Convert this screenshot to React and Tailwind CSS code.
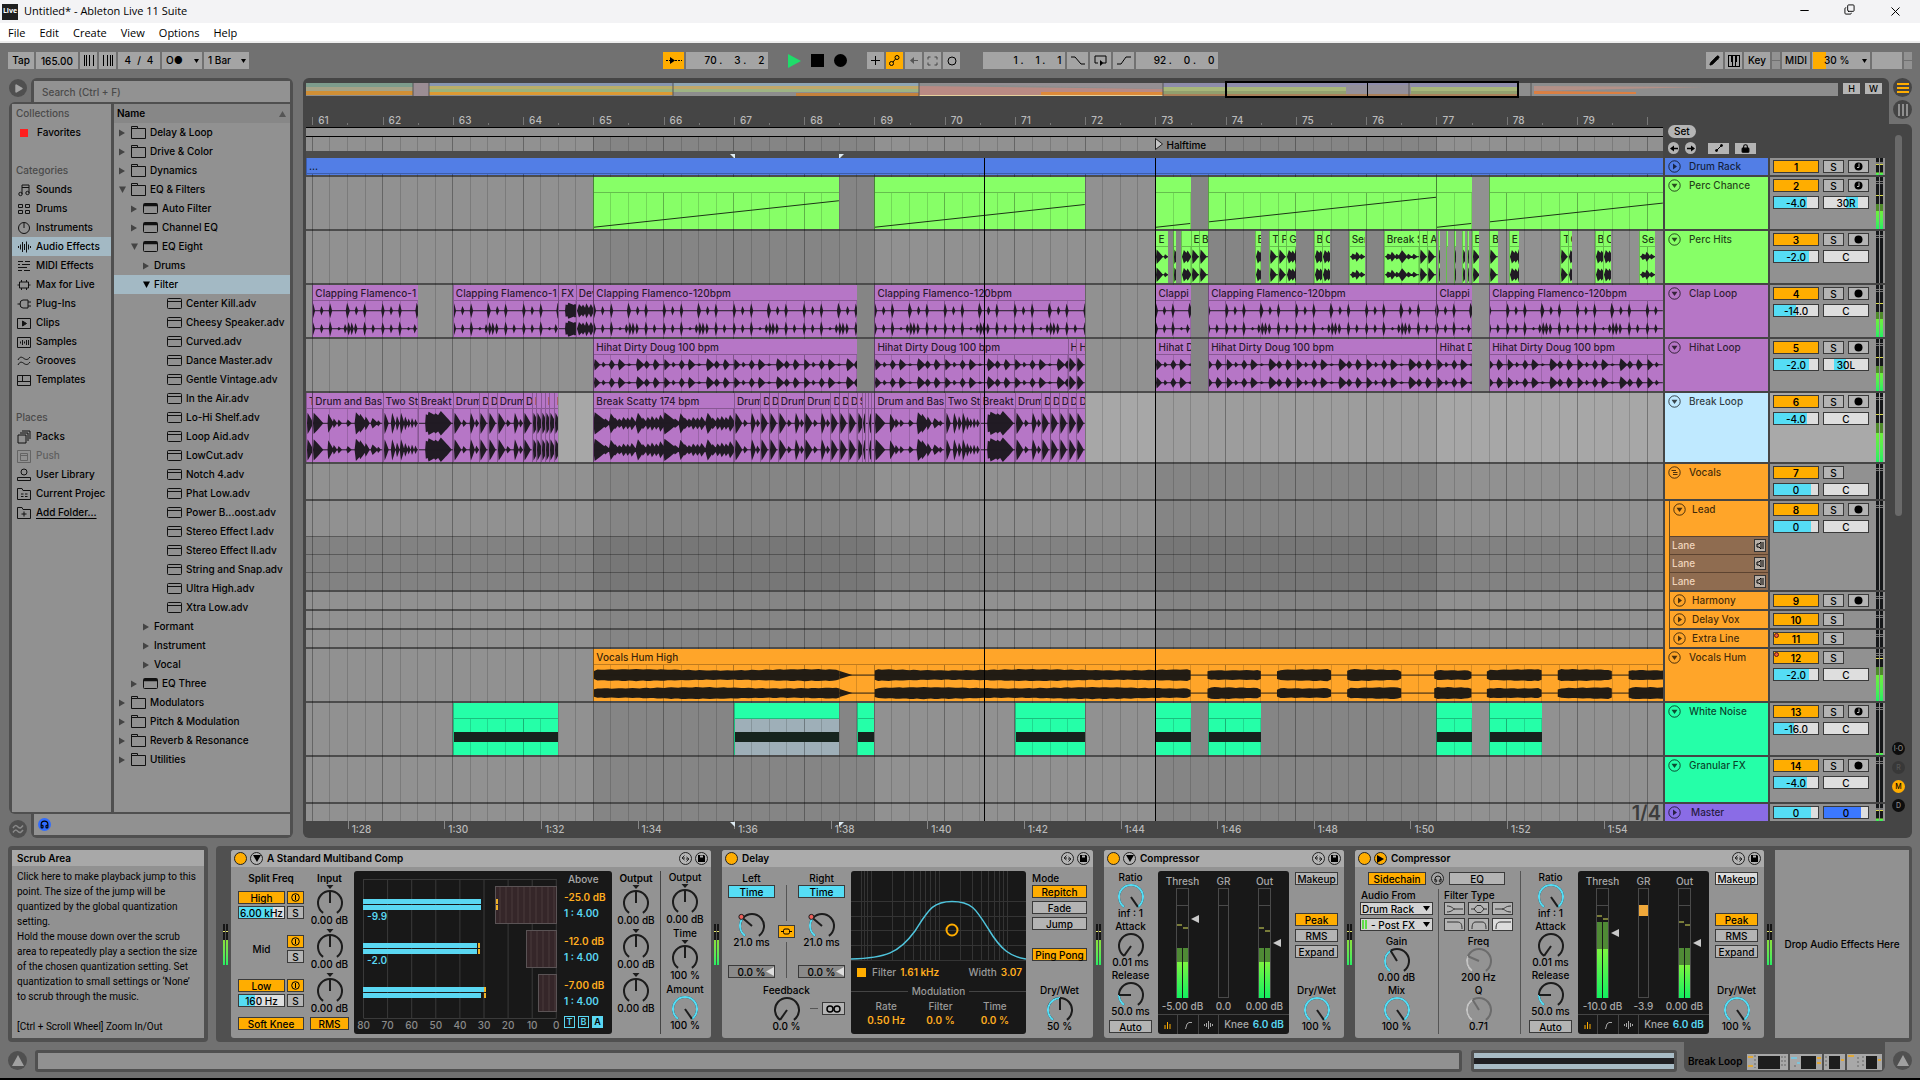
import React from 'react';
import { Minus, Copy, X, Play, Headphones, Lock, Pencil } from 'lucide-react';

// Visible range of the arrangement, in bars
const VIEW_START = 60.91;
const VIEW_SPAN = 19.314;
const VIEW_END = VIEW_START + VIEW_SPAN;
const pct = (bar) => `${((bar - VIEW_START) / VIEW_SPAN) * 100}%`;
const span = (bars) => `${(bars / VIEW_SPAN) * 100}%`;

/* ---------- waveforms ---------- */

// [position, height, attack, decay], repeated every bar
const CLAP_TOP = [[0, 21, 0.02, 0.03], [0.12, 13, 0.02, 0.03], [0.245, 21, 0.02, 0.03], [0.49, 22, 0.02, 0.04], [0.62, 13, 0.02, 0.03], [0.74, 20, 0.02, 0.03]];
const CLAP_BOTTOM = [[0, 18, 0.02, 0.03], [0.12, 13, 0.02, 0.03], [0.245, 21, 0.02, 0.03], [0.37, 5, 0.02, 0.03], [0.46, 13, 0.02, 0.03], [0.51, 19, 0.02, 0.03], [0.555, 18, 0.02, 0.03], [0.61, 16, 0.02, 0.03], [0.74, 20, 0.02, 0.03], [0.86, 13, 0.02, 0.03]];
const HIHAT = [[0.01, 16, 0.01, 0.08], [0.13, 8, 0.02, 0.04], [0.25, 14, 0.04, 0.05], [0.36, 16, 0.02, 0.09], [0.5, 4, 0.03, 0.04], [0.62, 18, 0.02, 0.1], [0.75, 12, 0.04, 0.05], [0.87, 16, 0.03, 0.07]];
const DRUM = [[0.01, 20, 0.01, 0.14], [0.22, 18, 0.01, 0.08], [0.3, 9, 0.02, 0.05], [0.37, 7, 0.02, 0.05], [0.5, 7, 0.02, 0.06], [0.62, 21, 0.02, 0.14], [0.68, 18, 0.03, 0.1], [0.76, 13, 0.02, 0.06], [0.86, 10, 0.03, 0.08], [0.94, 6, 0.02, 0.04]];
const DENSE = [[0.01, 21, 0.02, 0.2], [0.08, 13, 0.05, 0.14], [0.16, 9, 0.04, 0.08], [0.24, 19, 0.03, 0.1], [0.3, 11, 0.04, 0.07], [0.36, 9, 0.04, 0.07], [0.42, 12, 0.04, 0.07], [0.48, 11, 0.04, 0.07], [0.54, 13, 0.04, 0.07], [0.63, 20, 0.04, 0.1], [0.7, 11, 0.04, 0.07], [0.77, 12, 0.04, 0.07], [0.83, 14, 0.04, 0.07], [0.89, 12, 0.04, 0.07], [0.95, 16, 0.04, 0.08]];
const TWO_STEP = [[0.01, 20, 0.01, 0.06], [0.12, 20, 0.02, 0.05], [0.19, 14, 0.02, 0.04], [0.25, 20, 0.02, 0.05], [0.31, 13, 0.02, 0.04], [0.36, 9, 0.02, 0.03], [0.41, 10, 0.02, 0.03], [0.46, 8, 0.02, 0.03]];
const BLOB = [[0.1, 17, 0.01, 0.3], [0.14, 22, 0.04, 0.3], [0.24, 19, 0.12, 0.2], [0.32, 23, 0.12, 0.16], [0.4, 12, 0.1, 0.08]];
const HIT = [[0.01, 20, 0.01, 0.1], [0.14, 7, 0.02, 0.05], [0.25, 20, 0.02, 0.06], [0.33, 8, 0.02, 0.04]];
const BURST = [[0.03, 19, 0.03, 0.09], [0.09, 17, 0.05, 0.06], [0.14, 21, 0.03, 0.06], [0.21, 19, 0.05, 0.05]];
const SHORT = [[0.04, 9, 0.03, 0.09], [0.1, 14, 0.03, 0.06], [0.17, 8, 0.03, 0.06], [0.25, 18, 0.06, 0.08], [0.34, 8, 0.03, 0.06], [0.42, 8, 0.03, 0.06]];

const PATTERNS = {
  clap: { top: CLAP_TOP, bottom: CLAP_BOTTOM },
  hihat: { top: HIHAT, bottom: HIHAT },
  drum: { top: DRUM, bottom: DRUM, local: true },
  dense: { top: DENSE, bottom: DENSE },
  two: { top: TWO_STEP, bottom: TWO_STEP, local: true },
  blob: { top: BLOB, bottom: BLOB, local: true },
  hit: { top: HIT, bottom: HIT, local: true },
  burst: { top: BURST, bottom: BURST, local: true },
  short: { top: SHORT, bottom: SHORT, local: true },
};

const hitPath = (hits, start, end, cy, local) => {
  let d = '';
  const first = local ? 0 : Math.floor(start) - 1;
  const last = local ? end - start : end;
  const origin = local ? 0 : start;
  for (let bar = first; bar <= last; bar++) {
    hits.forEach(([p, h, a, r]) => {
      const x = (bar + p - origin) * 100;
      if (x < -20 || x > (end - start) * 100) return;
      d += `M${(x - a * 100).toFixed(1)} ${cy}L${x.toFixed(1)} ${cy - h}L${(x + r * 40).toFixed(1)} ${cy - h * 0.62}L${(x + r * 100).toFixed(1)} ${cy}L${(x + r * 40).toFixed(1)} ${cy + h * 0.62}L${x.toFixed(1)} ${cy + h}Z`;
    });
  }
  return d;
};

const Waveform = ({ kind, start, end }) => {
  const width = (end - start) * 100;
  const { top, bottom, local } = PATTERNS[kind];
  return (
    <svg className="relative z-20 block w-full h-full" viewBox={`0 0 ${width} 100`} preserveAspectRatio="none" fill="#211b24">
      <path d={hitPath(top, start, end, 27, local)} />
      <path d={hitPath(bottom, start, end, 77, local)} />
      <path d={`M0 27H${width}M0 77H${width}`} stroke="#211b24" strokeWidth="1" vectorEffect="non-scaling-stroke" />
    </svg>
  );
};

const HUM_PARTS = [[65, 68.5], [69, 73.5], [73.74, 74.5], [74.73, 75.5], [75.73, 76.5], [76.97, 77.5], [77.72, 78.5], [78.73, 79.5], [79.74, 80.3]];

const HumWave = ({ start, end }) => {
  const width = (end - start) * 100;
  const block = (a, b, cy, seed) => {
    const up = [];
    const down = [];
    const steps = Math.max(10, Math.round((b - a) * 20));
    for (let i = 0; i <= steps; i++) {
      const x = ((a + ((b - a) * i) / steps - start) * 100).toFixed(1);
      const edge = i === 0 || i === steps ? 11 : 14.5;
      const h = edge + Math.sin(i * 1.7 + seed) * 0.7 + Math.sin(i * 0.13 + seed * 2) * 1.6;
      up.push(`${x} ${(cy - h).toFixed(1)}`);
      down.unshift(`${x} ${(cy + h).toFixed(1)}`);
    }
    return `M${up.join('L')}L${down.join('L')}Z`;
  };
  return (
    <svg className="relative z-20 block w-full h-full" viewBox={`0 0 ${width} 100`} preserveAspectRatio="none" fill="#221c14">
      {HUM_PARTS.map(([a, b], i) => (
        <path key={a} d={block(a, b, 28, i) + block(a, b, 78, i + 2)} />
      ))}
      <path d="M350 17L368 28L350 39ZM350 67L368 78L350 89Z" />
      <path d={`M0 28H${width}M0 78H${width}`} stroke="#221c14" vectorEffect="non-scaling-stroke" />
    </svg>
  );
};

/* ---------- tracks ---------- */

const GREEN = 'bg-[#87ff67]';
const PURPLE = 'bg-[#b676c6]';
const ORANGE = 'bg-[#ffa529]';
const TEAL = 'bg-[#25ffa8]';

const clap = 'Clapping Flamenco-120bpm';
const hihat = 'Hihat Dirty Doug 100 bpm';

// [label, start, end, waveform]
const percHits = [
  ['E', 73, 73.18, 'hit'], ['', 73.25, 73.29, 'hit'], ['', 73.37, 73.5, 'burst'], ['E', 73.5, 73.62, 'hit'], ['B', 73.62, 73.75, 'hit'],
  ['E', 74.41, 74.5, 'burst'], ['T', 74.62, 74.75, 'hit'], ['P', 74.75, 74.86, 'hit'], ['G', 74.86, 75, 'burst'],
  ['B', 75.25, 75.375, 'burst'], ['C', 75.375, 75.48, 'burst'], ['Ser', 75.75, 75.98, 'short'],
  ['Break S', 76.25, 76.75, 'short'], ['B', 76.75, 76.87, 'hit'], ['A', 76.87, 77, 'hit'],
  ['', 77.02, 77.05, 'hit'], ['', 77.13, 77.15, 'hit'], ['', 77.25, 77.27, 'hit'], ['', 77.37, 77.4, 'hit'], ['', 77.43, 77.46, 'hit'],
  ['E', 77.5, 77.6, 'hit'], ['B', 77.75, 77.875, 'hit'], ['E', 78.03, 78.17, 'burst'], ['T', 78.76, 78.865, 'hit'], ['C', 78.865, 78.93, 'burst'],
  ['B', 79.25, 79.375, 'burst'], ['C', 79.375, 79.485, 'burst'], ['Ser', 79.88, 80.11, 'short'],
];

const breakLoop = [
  ['T', 60.91, 61, 'hit'], ['Drum and Bas', 61, 62, 'drum'], ['Two St', 62, 62.5, 'two'], ['Breakt', 62.5, 63, 'blob'],
  ['Drum', 63, 63.375, 'hit'], ['D', 63.375, 63.5, 'hit'], ['D', 63.5, 63.625, 'hit'], ['Drum', 63.625, 64, 'hit'], ['D', 64, 64.125, 'hit'],
  ['I', 64.125, 64.19, 'hit'], ['', 64.19, 64.25, 'hit'], ['', 64.25, 64.31, 'hit'], ['I', 64.31, 64.37, 'hit'], ['', 64.37, 64.44, 'hit'], ['I', 64.44, 64.5, 'hit'],
  ['Break Scatty 174 bpm', 65, 67, 'dense'], ['Drum', 67, 67.375, 'hit'], ['D', 67.375, 67.5, 'hit'], ['D', 67.5, 67.625, 'hit'],
  ['Drum', 67.625, 68, 'hit'], ['Drum', 68, 68.375, 'hit'], ['D', 68.375, 68.5, 'hit'], ['D', 68.5, 68.625, 'hit'], ['D', 68.625, 68.75, 'hit'],
  ['S', 68.75, 68.82, 'hit'], ['', 68.82, 68.87, 'burst'], ['', 68.87, 68.91, 'blob'], ['', 68.91, 68.95, 'burst'], ['', 68.95, 69, 'blob'],
  ['Drum and Bas', 69, 70, 'drum'], ['Two St', 70, 70.5, 'two'], ['Breakt', 70.5, 71, 'blob'], ['Drum', 71, 71.375, 'hit'],
  ['D', 71.375, 71.5, 'hit'], ['D', 71.5, 71.625, 'hit'], ['D', 71.625, 71.75, 'hit'], ['D', 71.75, 71.875, 'hit'], ['D', 71.875, 72, 'hit'],
];

const TRACKS = [
  { n: 1, name: 'Drum Rack', color: 'bg-[#527ee6]', h: 'h-[19px]', folded: true, arm: 'midi', level: 85, clips: [['...', 60.91, VIEW_END, 'flat']] },
  { n: 2, name: 'Perc Chance', color: GREEN, h: 'h-[54px]', arm: 'midi', vol: '-4.0', fill: 75, pan: '30R', panFrom: 50, panTo: 78, level: 34,
    clips: [['', 65, 68.5, 'ramp', 5], ['', 69, 72, 'ramp', 5], ['', 73, 73.5, 'ramp', 5], ['', 73.75, 77, 'ramp', 20], ['', 77, 77.5, 'ramp', 5], ['', 77.75, VIEW_END, 'ramp', 20]] },
  { n: 3, name: 'Perc Hits', color: GREEN, h: 'h-[54px]', arm: 'rec', vol: '-2.0', fill: 79, pan: 'C', level: 0, clips: percHits },
  { n: 4, name: 'Clap Loop', color: PURPLE, h: 'h-[54px]', arm: 'rec', vol: '-14.0', fill: 50, pan: 'C', level: 34,
    clips: [['Clapping Flamenco-1', 61, 62.5, 'clap'], ['Clapping Flamenco-1', 63, 64.5, 'clap'], ['FX', 64.5, 64.75, 'blob'], ['Dev', 64.75, 65, 'burst'], [clap, 65, 68.75, 'clap'], [clap, 69, 72, 'clap'], ['Clappi', 73, 73.5, 'clap'], [clap, 73.75, 77, 'clap'], ['Clappi', 77, 77.5, 'clap'], [clap, 77.75, VIEW_END, 'clap']] },
  { n: 5, name: 'Hihat Loop', color: PURPLE, h: 'h-[54px]', arm: 'rec', vol: '-2.0', fill: 79, pan: '30L', panFrom: 22, panTo: 50, level: 34,
    clips: [[hihat, 65, 68.75, 'hihat'], [hihat, 69, 71.75, 'hihat'], ['H', 71.75, 71.875, 'hit'], ['H', 71.875, 72, 'hit'], ['Hihat D', 73, 73.5, 'hihat'], [hihat, 73.75, 77, 'hihat'], ['Hihat D', 77, 77.5, 'hihat'], [hihat, 77.75, VIEW_END, 'hihat']] },
  { n: 6, name: 'Break Loop', color: 'bg-[#bfe9ff]', clipColor: PURPLE, h: 'h-[71px]', arm: 'rec', vol: '-4.0', fill: 75, pan: 'C', level: 42, selected: true, clips: breakLoop },
  { n: 7, name: 'Vocals', color: ORANGE, h: 'h-[37px]', group: true, vol: '0', fill: 84, pan: 'C', level: 0, clips: [] },
  { n: 8, name: 'Lead', color: ORANGE, h: 'h-[91px]', child: true, arm: 'rec', vol: '0', fill: 84, pan: 'C', level: 0, lanes: 3, clips: [] },
  { n: 9, name: 'Harmony', color: ORANGE, h: 'h-[19px]', child: true, folded: true, arm: 'rec', level: 0, clips: [] },
  { n: 10, name: 'Delay Vox', color: ORANGE, h: 'h-[19px]', child: true, folded: true, level: 0, clips: [] },
  { n: 11, name: 'Extra Line', color: ORANGE, h: 'h-[19px]', child: true, folded: true, dot: true, level: 0, clips: [] },
  { n: 12, name: 'Vocals Hum', color: ORANGE, h: 'h-[54px]', dot: true, vol: '-2.0', fill: 79, pan: 'C', level: 50, clips: [['Vocals Hum High', 65, VIEW_END, 'hum']] },
  { n: 13, name: 'White Noise', color: TEAL, h: 'h-[54px]', arm: 'midi', vol: '-16.0', fill: 45, pan: 'C', level: 3,
    clips: [['', 63, 64.5, 'note'], ['', 67, 68.5, 'noteSelected'], ['', 68.75, 69, 'note'], ['', 71, 72, 'note'], ['', 73, 73.5, 'note'], ['', 73.75, 74.5, 'note'], ['', 77, 77.5, 'note'], ['', 77.75, 78.5, 'note']] },
  { n: 14, name: 'Granular FX', color: TEAL, h: 'h-[47px]', arm: 'rec', vol: '-4.0', fill: 75, pan: 'C', level: 0, clips: [] },
];

const Ramp = ({ start, end, from }) => {
  const width = (end - start) * 70;
  return (
    <svg className="relative z-20 block w-full h-full" viewBox={`0 0 ${width} 100`} preserveAspectRatio="none">
      <path d={`M0 ${100 - from}L${width} ${100 - from - (end - start) * 21}`} stroke="#1d3517" strokeWidth="1" fill="none" vectorEffect="non-scaling-stroke" />
    </svg>
  );
};

const Clip = ({ clip, color }) => {
  const [label, start, end, kind, from] = clip;
  return (
    <div
      className={`absolute inset-y-0 overflow-hidden border-l border-black/25 flex flex-col ${color}`}
      style={{ left: pct(start), width: span(end - start) }}
    >
      <div className={`relative z-20 h-4 shrink-0 border-b border-black/25 pl-0.5 text-[10px] leading-[17px] whitespace-nowrap text-black/80 ${color}`}>{label}</div>
      <div className={`relative flex-1 min-h-0 ${kind === 'noteSelected' ? 'bg-[#9eafb8]' : ''}`}>
        {kind === 'ramp' && <Ramp start={start} end={end} from={from} />}
        {kind === 'hum' && <HumWave start={start} end={end} />}
        {kind.startsWith('note') && <div className="relative z-20 mt-[13px] h-[10px] bg-[#16241e]" />}
        {PATTERNS[kind] && <Waveform kind={kind} start={start} end={end} />}
      </div>
    </div>
  );
};

const Lane = ({ track }) => (
  <div className={`relative border-b-2 border-[#4c4c4c] ${track.h} ${track.selected ? 'bg-white/20' : ''}`}>
    {track.lanes && (
      <div className="absolute inset-x-0 bottom-0 top-[35px] flex flex-col bg-black/10">
        <div className="flex-1 border-t border-black/30" />
        <div className="flex-1 border-t border-black/30" />
        <div className="flex-1 border-t border-black/30" />
      </div>
    )}
    {track.clips.map((clip, i) => (
      <Clip key={i} clip={clip} color={track.clipColor || track.color} />
    ))}
  </div>
);

const GridLines = ({ className }) => {
  const lines = [];
  for (let q = 61; q < VIEW_END; q += 0.25) lines.push(q);
  return (
    <svg className={`absolute inset-0 w-full h-full ${className}`}>
      {lines.map((q) => (
        <line key={q} x1={pct(q)} x2={pct(q)} y1="0" y2="100%" stroke="#000" strokeOpacity={Number.isInteger(q) ? 0.3 : 0.15} shapeRendering="crispEdges" />
      ))}
    </svg>
  );
};

const Bands = () => (
  <div className="absolute inset-0">
    {[65, 73].map((b) => (
      <div key={b} className="absolute inset-y-0 bg-black/8" style={{ left: pct(b), width: span(4) }} />
    ))}
  </div>
);

/* ---------- small shared pieces ---------- */

const Btn = ({ className = '', on, children, ...rest }) => (
  <button className={`flex items-center justify-center border border-[#3a3a3a] h-[13px] text-[10px] leading-none whitespace-nowrap text-black ${on === 'amber' ? 'bg-[#ffad00]' : on === 'cyan' ? 'bg-[#55ddf5]' : on === 'white' ? 'bg-[#dcdcdc]' : 'bg-[#b4b4b4]'} ${className}`} {...rest}>
    {children}
  </button>
);

const Field = ({ label, value, from = 0, to = 0, fill = 'bg-[#55ddf5]', bg = 'bg-[#dedede]', className = '' }) => (
  <div className={`relative h-[13px] border border-[#3a3a3a] ${bg} ${className}`}>
    <div className={`absolute inset-y-0 ${fill}`} style={{ left: `${from}%`, width: `${to - from}%` }} />
    <input aria-label={label} defaultValue={value} className="absolute inset-0 w-full bg-transparent text-center text-[10px] leading-none text-black outline-none" />
  </div>
);

const FoldIcon = ({ folded, group }) => (
  <svg width="13" height="13" viewBox="0 0 13 13" fill="none" stroke="#000" strokeOpacity="0.7">
    <circle cx="6.5" cy="6.5" r="5.7" />
    {group && <path d="M3.5 4.5H8M5 6.5H9.5M5 8.5H9.5" />}
    {!group && folded && <path d="M5 3.5L9 6.5L5 9.5Z" fill="#000" fillOpacity="0.7" stroke="none" />}
    {!group && !folded && <path d="M3.5 4.8H9.5L6.5 9Z" fill="#000" fillOpacity="0.7" stroke="none" />}
  </svg>
);

const Meter = ({ level }) => (
  <div className="flex gap-px w-[7px] self-stretch">
    {[0, 1].map((i) => (
      <div key={i} className="flex flex-1 flex-col justify-end bg-[#151719]">
        <div className="flex flex-col h-[3px] mb-auto mt-1 border-y border-[#777]" />
        {level > 20 && <div className="h-px mb-2 bg-[#d8d84a]" />}
        {level > 5 && <div className="h-[15%] bg-[#4f8a2b]" />}
        <div className="bg-linear-to-t from-[#1fef62] to-[#6fee3c]" style={{ height: `${level}%` }} />
      </div>
    ))}
  </div>
);

const TrackHeader = ({ track }) => (
  <div className={`flex ${track.h}`}>
    {track.child && <div className="w-1 shrink-0 bg-[#ffa529]" />}
    <div className={`flex flex-1 flex-col pb-0.5 ${track.child ? 'border-l border-[#6b4a1c]' : ''}`}>
      <div className={`flex flex-1 items-start px-[3px] pt-[2px] ${track.child ? 'gap-1.5' : 'gap-2'} ${track.color}`}>
        <button aria-label={`Fold ${track.name}`} className="shrink-0"><FoldIcon folded={track.folded} group={track.group} /></button>
        <span className="text-[10px] leading-[13px] text-black/75 whitespace-nowrap">{track.name}</span>
      </div>
      {track.lanes && [1, 2, 3].map((l) => (
        <div key={l} className="flex h-[18px] items-center justify-between border-t border-[#5c4330] bg-[#8f6c50] pl-0.5 pr-0.5">
          <span className="text-[10px] text-[#f0d4bb]">Lane</span>
          <button aria-label={`Play lane ${l}`} className="flex h-[13px] w-3 items-center justify-center border border-[#333] bg-[#b8b0a8]">
            <svg width="8" height="9" viewBox="0 0 8 9" stroke="#000" fill="none"><path d="M1 3H3L5 1V8L3 6H1ZM7 1V8" /></svg>
          </button>
        </div>
      ))}
    </div>
  </div>
);

const ArmIcon = ({ kind }) => (
  <svg width="9" height="9" viewBox="0 0 9 9">
    <circle cx="4.5" cy="4.5" r="4" fill="#000" />
    {kind === 'midi' && <path d="M5 1.5V5.5H3" stroke="#bbb" fill="none" />}
  </svg>
);

const TrackMixer = ({ track }) => (
  <div className={`pb-0.5 ${track.h}`}>
    <div className={`flex h-full pl-[3px] pr-0.5 ${track.selected ? 'bg-[#a9a9a9]' : 'bg-[#919191]'}`}>
      <div className="flex flex-1 flex-col gap-1 pt-[2px]">
        <div className="flex gap-1">
          <div className="relative">
            <Btn on="amber" className="w-[46px] font-semibold" aria-label={`Activate track ${track.n}`}>{track.n}</Btn>
            {track.dot && <span className="absolute left-px top-px h-[5px] w-[5px] rounded-full border border-[#5c1a12] bg-[#f05a3c]" />}
          </div>
          <Btn className="w-[21px]" aria-label={`Solo ${track.name}`}>S</Btn>
          {track.arm && <Btn className="w-[21px]" aria-label={`Arm ${track.name}`}><ArmIcon kind={track.arm} /></Btn>}
        </div>
        {track.vol && (
          <div className="flex gap-1">
            <Field label={`${track.name} volume`} value={track.vol} to={track.fill} className="w-[46px]" />
            <Field label={`${track.name} pan`} value={track.pan} from={track.panFrom || 0} to={track.panTo || 0} className="w-[46px]" />
          </div>
        )}
      </div>
      <Meter level={track.level} />
    </div>
  </div>
);

/* ---------- top bars ---------- */

const ToolBtn = ({ className = '', on, children, ...rest }) => (
  <button className={`flex h-[17px] items-center justify-center text-[10px] whitespace-nowrap text-black ${on ? 'bg-[#ffad00]' : 'bg-[#a4a4a4]'} ${className}`} {...rest}>
    {children}
  </button>
);

const Position = ({ label, parts }) => (
  <div role="group" aria-label={label} className="flex h-[17px] w-[82px] items-center justify-end gap-3 bg-[#a4a4a4] pr-1 text-[10px] text-black">
    {parts.map((p, i) => <span key={i}>{p}</span>)}
  </div>
);

const Caret = ({ className }) => (
  <svg className={`pointer-events-none absolute ${className}`} width="5" height="4" viewBox="0 0 5 4"><path d="M0 0H5L2.5 4Z" /></svg>
);

const ToolSelect = ({ label, options, className }) => (
  <div className={`relative h-[17px] bg-[#a4a4a4] ${className}`}>
    <select aria-label={label} className="block h-[17px] w-full appearance-none bg-transparent pl-1 text-[10px] leading-[17px] text-black">
      {options.map((o) => <option key={o}>{o}</option>)}
    </select>
    <Caret className="right-[3px] top-[7px]" />
  </div>
);

const SplitBox = () => (
  <div className="flex w-2 flex-col gap-px"><div className="flex-1 bg-[#929292]" /><div className="flex-1 bg-[#929292]" /></div>
);

const Toolbar = () => (
  <div className="flex h-[35px] items-center px-2">
    <div className="flex gap-0.5">
      <ToolBtn className="w-[26px]">Tap</ToolBtn>
      <input aria-label="Tempo" defaultValue="165.00" className="h-[17px] w-[42px] bg-[#a4a4a4] text-center text-[10px] text-black" />
      <ToolBtn className="w-[17px]" aria-label="Nudge down"><svg width="12" height="11" viewBox="0 0 12 11" stroke="#000" shapeRendering="crispEdges"><path d="M1.5 0V11M3.5 0V11M6.5 0V11M10.5 0V11" /></svg></ToolBtn>
      <ToolBtn className="w-[17px]" aria-label="Nudge up"><svg width="12" height="11" viewBox="0 0 12 11" stroke="#000" shapeRendering="crispEdges"><path d="M1.5 0V11M5.5 0V11M8.5 0V11M10.5 0V11" /></svg></ToolBtn>
      <ToolBtn className="w-[42px] gap-1.5"><span>4</span><span>/</span><span>4</span></ToolBtn>
      <ToolSelect label="Metronome" options={['O●']} className="w-[40px]" />
      <ToolSelect label="Quantization" options={['1 Bar']} className="w-[45px]" />
    </div>
    <div className="grow-[17]" />
    <div className="flex items-center gap-0.5">
      <ToolBtn on className="w-[21px]" aria-label="Follow"><svg width="16" height="9" viewBox="0 0 16 9"><path d="M0 4.5H5M9 4.5H16" stroke="#000" strokeDasharray="2 1" /><path d="M4 1L9 4.5L4 8Z" /></svg></ToolBtn>
      <Position label="Arrangement position" parts={['70 .', '3 .', '2']} />
      <button aria-label="Play" className="ml-[18px] flex w-[13px] justify-center"><svg width="13" height="14" viewBox="0 0 13 14"><path d="M0 0L13 7L0 14Z" fill="#1fdc6a" /></svg></button>
      <button aria-label="Stop" className="ml-2 h-[13px] w-[13px] bg-black" />
      <button aria-label="Record" className="ml-2 mr-[18px] h-[13px] w-[13px] rounded-full bg-black" />
      <ToolBtn className="w-[17px]" aria-label="Overdub"><svg width="11" height="11" viewBox="0 0 11 11" stroke="#000"><path d="M5.5 1V10M1 5.5H10" /></svg></ToolBtn>
      <ToolBtn on className="w-[17px]" aria-label="Automation arm"><svg width="13" height="13" viewBox="0 0 13 13" stroke="#000" fill="none"><circle cx="3.5" cy="9.5" r="2" /><circle cx="9" cy="3.5" r="2" /><path d="M5 8L7.5 5" /></svg></ToolBtn>
      <ToolBtn className="w-[17px]" aria-label="Re-enable automation"><svg width="10" height="9" viewBox="0 0 10 9" stroke="#555" fill="#555"><path d="M4 4.5H9" /><path d="M5 1L1 4.5L5 8Z" stroke="none" /></svg></ToolBtn>
      <ToolBtn className="w-[17px]" aria-label="Capture"><svg width="11" height="10" viewBox="0 0 11 10" stroke="#444" fill="none"><path d="M1 3.5V1H3.5M7.5 1H10V3.5M10 6.5V9H7.5M3.5 9H1V6.5" /></svg></ToolBtn>
      <ToolBtn className="w-[17px]" aria-label="Session record"><svg width="10" height="10" viewBox="0 0 10 10" stroke="#000" fill="none"><circle cx="5" cy="5" r="4" /></svg></ToolBtn>
      <div className="w-[19px]" />
      <Position label="Loop start" parts={['1 .', '1 .', '1']} />
      <ToolBtn className="w-[21px]" aria-label="Punch in"><svg width="14" height="9" viewBox="0 0 14 9" stroke="#000" fill="none"><path d="M0 1H4L10 8H14" /></svg></ToolBtn>
      <ToolBtn className="w-[21px]" aria-label="Loop"><svg width="13" height="11" viewBox="0 0 13 11" stroke="#000" fill="none"><path d="M4 8H1V1H12V8H9" /><path d="M6 5L9.5 8L6 11Z" fill="#000" stroke="none" /></svg></ToolBtn>
      <ToolBtn className="w-[21px]" aria-label="Punch out"><svg width="14" height="9" viewBox="0 0 14 9" stroke="#000" fill="none"><path d="M0 8H4L9 1H14" /></svg></ToolBtn>
      <Position label="Loop length" parts={['92 .', '0 .', '0']} />
    </div>
    <div className="grow-[20]" />
    <div className="flex gap-0.5">
      <ToolBtn className="w-[17px]" aria-label="Draw mode"><Pencil size={11} fill="#000" /></ToolBtn>
      <ToolBtn className="w-[17px]" aria-label="Computer MIDI keyboard">
        <svg width="12" height="12" viewBox="0 0 12 12" stroke="#000" fill="none" shapeRendering="crispEdges"><path d="M0.5 0.5H11.5V11.5H0.5ZM4.5 6V12M7.5 6V12" /><path d="M4 0V7M8 0V7" strokeWidth="2" /></svg>
      </ToolBtn>
      <ToolBtn className="w-[26px]">Key</ToolBtn>
      <SplitBox />
      <ToolBtn className="w-[28px]">MIDI</ToolBtn>
      <div className="relative h-[17px] w-[58px] bg-[#a4a4a4]">
        <div className="absolute inset-y-0 left-px w-[13px] bg-[#ffad00]" />
        <select aria-label="CPU load" className="relative block h-[17px] w-full appearance-none bg-transparent pl-3 text-[10px] leading-[17px] text-black"><option>30 %</option></select>
        <Caret className="right-[3px] top-[7px]" />
      </div>
      <div className="w-[30px] bg-[#a4a4a4]" />
      <SplitBox />
    </div>
  </div>
);

const WindowBar = () => (
  <header className="font-['Open_Sans',sans-serif] font-normal">
    <div className="flex h-[23px] items-center bg-[#f3f3f5]">
      <div className="ml-0.5 flex h-4 w-4 items-center justify-center bg-[#1f1f1f] text-[7px] font-bold text-white">Live</div>
      <h1 className="ml-1.5 text-[11px] text-black">Untitled* - Ableton Live 11 Suite</h1>
      <div className="ml-auto flex text-black">
        <button aria-label="Minimize" className="flex w-[45px] justify-center"><Minus size={13} strokeWidth={2} /></button>
        <button aria-label="Restore" className="flex w-[45px] justify-center"><Copy size={11} strokeWidth={2} className="-scale-x-100 rotate-180" /></button>
        <button aria-label="Close" className="mr-[2px] flex w-[46px] justify-center"><X size={15} strokeWidth={1.6} /></button>
      </div>
    </div>
    <nav className="flex h-5 items-end gap-[14px] border-b-2 border-[#ededed] bg-white pl-2 text-[11px] leading-[17px] text-black">
      {['File', 'Edit', 'Create', 'View', 'Options', 'Help'].map((m) => <button key={m}>{m}</button>)}
    </nav>
  </header>
);

/* ---------- browser ---------- */

const SideIcon = ({ name }) => {
  const shapes = {
    Sounds: <><path d="M5 11V2H12V10" /><path d="M5 4.5H12" /><circle cx="3.5" cy="11" r="1.7" /><circle cx="10.5" cy="10" r="1.7" /></>,
    Drums: <path d="M1.5 2.5H5.5V5.5H1.5ZM8.5 2.5H12.5V5.5H8.5ZM1.5 8.5H5.5V11.5H1.5ZM8.5 8.5H12.5V11.5H8.5Z" />,
    Instruments: <><circle cx="7" cy="7" r="5.5" /><path d="M7 2V7" /></>,
    'Audio Effects': <path d="M1.5 6V8M3.5 4.5V9.5M5.5 2V12M7.5 4V10M9.5 1.5V12.5M11.5 4.5V9.5M13.5 6V8" />,
    'MIDI Effects': <path d="M1 2.5H6M8 2.5H13M1 5.5H3M5 5.5H13M1 8.5H10M1 11.5H5M7 11.5H13" />,
    'Max for Live': <path d="M2.5 4H11.5V10H2.5ZM4.5 4V2M9.5 4V2M4.5 10V12M9.5 10V12M2.5 7H0.5M11.5 7H13.5" />,
    'Plug-Ins': <path d="M0.5 7H3.5M11 3H6A3 4 0 0 0 6 11H11ZM11 5H14M11 9H14" />,
    Clips: <><path d="M0.5 2.5H13.5V12.5H0.5Z" /><path d="M5.5 5L9.5 7.5L5.5 10Z" fill="#111" /></>,
    Samples: <><path d="M0.5 2.5H13.5V12.5H0.5Z" /><path d="M3.5 6.5V8.5M5.5 5V10M7.5 6.5V8.5M9.5 5V10M11.5 5V10" /></>,
    Grooves: <path d="M1 6C3 2 5 3 7 4.5S11 6 13 3M1 11C3 7 5 8 7 9.5S11 11 13 8" />,
    Templates: <path d="M0.5 2.5H13.5V12.5H0.5ZM5.5 2.5V8.5M0.5 8.5H13.5" />,
    Packs: <path d="M1 5H9V13H1ZM3 3H11V11M5 1H13V9" />,
    Push: <path d="M0.5 1.5H13.5V13.5H0.5ZM3.5 4.5H10.5V11.5H3.5ZM3.5 6.5H10.5" />,
    'User Library': <><circle cx="7" cy="4" r="3" /><path d="M0.5 12.5V9.5H13.5V12.5Z" /></>,
    'Current Projec': <path d="M0.5 12.5V1.5H5L6 3.5H13.5V12.5ZM4 7H6.5M8 7H10.5M4 9.5H6.5M8 9.5H10.5" />,
    'Add Folder...': <path d="M0.5 12.5V1.5H5L6 3.5H13.5V12.5ZM7 5.5V10.5M4.5 8H9.5" />,
  };
  return <svg width="14" height="14" viewBox="0 0 14 14" fill="none" stroke="#111" className="shrink-0">{shapes[name]}</svg>;
};

const CATEGORIES = ['Sounds', 'Drums', 'Instruments', 'Audio Effects', 'MIDI Effects', 'Max for Live', 'Plug-Ins', 'Clips', 'Samples', 'Grooves', 'Templates'];
const PLACES = ['Packs', 'Push', 'User Library', 'Current Projec', 'Add Folder...'];

const SideItem = ({ name }) => (
  <li>
    <button className={`flex h-[19px] w-full items-center gap-[5px] overflow-hidden pl-[5px] whitespace-nowrap ${name === 'Audio Effects' ? 'bg-[#a3b9c4]' : ''} ${name === 'Push' ? 'opacity-35' : ''} ${name === 'Add Folder...' ? 'underline underline-offset-2' : ''}`}>
      <SideIcon name={name} />
      <span>{name}</span>
    </button>
  </li>
);

const PRESETS = ['Center Kill', 'Cheesy Speaker', 'Curved', 'Dance Master', 'Gentle Vintage', 'In the Air', 'Lo-Hi Shelf', 'Loop Aid', 'LowCut', 'Notch 4', 'Phat Low', 'Power B...oost', 'Stereo Effect I', 'Stereo Effect II', 'String and Snap', 'Ultra High', 'Xtra Low'];

// [label, indent class, arrow, icon]
const TREE = [
  ['Delay & Loop', 'pl-[5px]', 'right', 'folder'],
  ['Drive & Color', 'pl-[5px]', 'right', 'folder'],
  ['Dynamics', 'pl-[5px]', 'right', 'folder'],
  ['EQ & Filters', 'pl-[5px]', 'down', 'folder'],
  ['Auto Filter', 'pl-[17px]', 'right', 'device'],
  ['Channel EQ', 'pl-[17px]', 'right', 'device'],
  ['EQ Eight', 'pl-[17px]', 'down', 'device'],
  ['Drums', 'pl-[29px]', 'right', null],
  ['Filter', 'pl-[29px]', 'down', null],
  ...PRESETS.map((n) => [`${n}.adv`, 'pl-[53px]', null, 'preset']),
  ['Formant', 'pl-[29px]', 'right', null],
  ['Instrument', 'pl-[29px]', 'right', null],
  ['Vocal', 'pl-[29px]', 'right', null],
  ['EQ Three', 'pl-[17px]', 'right', 'device'],
  ['Modulators', 'pl-[5px]', 'right', 'folder'],
  ['Pitch & Modulation', 'pl-[5px]', 'right', 'folder'],
  ['Reverb & Resonance', 'pl-[5px]', 'right', 'folder'],
  ['Utilities', 'pl-[5px]', 'right', 'folder'],
];

const TreeIcon = ({ kind }) => (
  <svg width="15" height="13" viewBox="0 0 15 13" fill="none" stroke="#111" className="mr-1 shrink-0">
    {kind === 'folder' && <path d="M0.5 12.5V0.5H6.5V2.5H14.5V12.5ZM0.5 2.5H6.5" />}
    {kind === 'device' && <><rect x="0.5" y="1.5" width="14" height="10" rx="1" /><path d="M1 3H14" strokeWidth="2.5" /></>}
    {kind === 'preset' && <><rect x="0.5" y="1.5" width="14" height="10" rx="1" /><path d="M1 4.5H14" /></>}
  </svg>
);

const Browser = () => (
  <aside className="flex w-[284px] shrink-0 flex-col text-[10px] text-black">
    <div className="flex">
      <div className="flex w-[22px] pt-px">
        <button aria-label="Hide browser" className="flex h-[18px] w-[18px] items-center justify-center rounded-full bg-[#4f4f4f]"><Play size={11} fill="#a4a4a4" stroke="none" /></button>
      </div>
      <div className="flex-1 rounded-t-md bg-[#4f4f4f] px-[3px] pt-[3px]">
        <input aria-label="Search" placeholder="Search (Ctrl + F)" className="block h-[21px] w-full bg-[#929292] pl-2 text-[10px] text-black placeholder:text-[#4a4a4a]" />
      </div>
    </div>
    <div className="flex flex-1 gap-[3px] rounded-tl-md rounded-bl-md bg-[#4f4f4f] px-[3px] py-[2px]">
      <div className="w-[99px] shrink-0 bg-[#919191]">
        <h2 className="h-[19px] pl-1 leading-[19px] text-[#4a4a4a]">Collections</h2>
        <button className="flex h-[19px] w-full items-center gap-[9px] pl-2"><span className="h-2 w-2 bg-[#ff1f1f]" /><span>Favorites</span></button>
        <h2 className="mt-[19px] h-[19px] pl-1 leading-[19px] text-[#4a4a4a]">Categories</h2>
        <ul>{CATEGORIES.map((c) => <SideItem key={c} name={c} />)}</ul>
        <h2 className="mt-[19px] h-[19px] pl-1 leading-[19px] text-[#4a4a4a]">Places</h2>
        <ul>{PLACES.map((c) => <SideItem key={c} name={c} />)}</ul>
      </div>
      <div className="min-w-0 flex-1 bg-[#919191]">
        <div className="flex h-[19px] items-center justify-between bg-[#878787] pl-[3px] pr-1 font-semibold">
          <span>Name</span>
          <svg width="7" height="6" viewBox="0 0 7 6"><path d="M3.5 0L7 6H0Z" fill="#555" /></svg>
        </div>
        <ul>
          {TREE.map(([label, indent, arrow, icon]) => (
            <li key={label}>
              <button className={`flex h-[19px] w-full items-center whitespace-nowrap ${indent} ${label === 'Filter' ? 'bg-[#a3b9c4]' : ''}`}>
                <span className={icon === null ? 'w-[11px]' : arrow ? 'w-3' : 'w-0'}>
                  {arrow === 'right' && <svg width="6" height="8" viewBox="0 0 6 8"><path d="M0 0.5L6 4L0 7.5Z" fill="#444" /></svg>}
                  {arrow === 'down' && <svg width="7" height="7" viewBox="0 0 7 7"><path d="M0 0.5H7L3.5 7Z" fill={label === 'Filter' ? '#000' : '#444'} /></svg>}
                </span>
                {icon && <TreeIcon kind={icon} />}
                <span>{label}</span>
              </button>
            </li>
          ))}
        </ul>
      </div>
    </div>
    <div className="flex">
      <div className="flex w-[22px] items-end">
        <button aria-label="Groove pool" className="flex h-[18px] w-[18px] items-center justify-center rounded-full bg-[#4f4f4f]">
          <svg width="12" height="10" viewBox="0 0 12 10" fill="none" stroke="#8a8a8a" strokeWidth="1.5"><path d="M1 4C3 1 4 1 6 3S9 4 11 1.5M1 8.5C3 5.5 4 5.5 6 7.5S9 8.5 11 6" /></svg>
        </button>
      </div>
      <div className="flex-1 rounded-b-md bg-[#4f4f4f] px-[3px] pb-[3px]">
        <div className="flex h-[21px] items-center bg-[#919191] pl-1">
          <button aria-label="Preview" className="flex h-[13px] w-[13px] items-center justify-center rounded-full bg-[#2f6bff]"><Headphones size={9} strokeWidth={3} /></button>
        </div>
      </div>
    </div>
  </aside>
);

/* ---------- arrangement ---------- */

const Overview = () => (
  <div className="flex gap-[5px] pr-[3px]">
    <div className="relative h-[13px] flex-1">
      <svg className="block h-full w-full" viewBox="0 0 1532 13" preserveAspectRatio="none">
        <rect width="1532" height="13" fill="#8d8d8d" />
        <rect width="107" height="4" fill="#7d9c8c" /><rect y="4" width="107" height="4" fill="#a5a287" /><rect y="8" width="107" height="4" fill="#d08f35" />
        <rect x="107" width="16" height="13" fill="#9b8d94" />
        <rect x="123" width="244" height="3" fill="#8796b0" /><rect x="123" y="3" width="244" height="3" fill="#b9ae68" /><rect x="123" y="6" width="244" height="3" fill="#9bb27c" /><rect x="123" y="9" width="244" height="3" fill="#dc9a34" />
        <rect x="367" width="246" height="3" fill="#8fa6b4" /><rect x="367" y="3" width="246" height="3" fill="#c0a869" /><rect x="367" y="6" width="246" height="3" fill="#9eb383" /><rect x="490" y="10" width="123" height="3" fill="#c4813c" />
        <path d="M613 3L857 6V13H613Z" fill="#b98a83" /><path d="M613 0H857V6Z" fill="#948f93" /><rect x="735" y="9" width="122" height="3" fill="#dd8a3a" /><path d="M613 12.5H857" stroke="#e5cf9b" />
        <rect x="857" width="356" height="4" fill="#8e8cab" /><rect x="857" y="4" width="356" height="4" fill="#a7b67a" /><rect x="857" y="8" width="356" height="3" fill="#92a06e" /><rect x="857" y="11" width="356" height="2" fill="#a97f59" />
        <rect x="1040" y="2" width="65" height="9" fill="#94909a" />
        <path d="M1228 3L1400 4L1228 8Z" fill="#b39087" /><path d="M1228 8L1330 9V11H1228Z" fill="#dc7f42" />
        <path d="M107 0V13M123 0V13M367 0V13M613 0V13M857 0V13M1103 0V13M1225 0V13" stroke="#555" />
      </svg>
      <div className="absolute -inset-y-0.5 left-[60%] w-[19.2%] border-2 border-black"><div className="h-full w-[48.5%] border-r border-black" /></div>
    </div>
    <div className="flex gap-[5px]">
      <button className="h-[11px] w-[17px] bg-[#b4b4b4] text-[9px] leading-[11px] text-black">H</button>
      <button className="h-[11px] w-[17px] bg-[#b4b4b4] text-[9px] leading-[11px] text-black">W</button>
    </div>
  </div>
);

const BARS = Array.from({ length: 20 }, (_, i) => 61 + i);
const TIMES = Array.from({ length: 14 }, (_, i) => i);

const LoopMarks = ({ className }) => (
  <>
    <svg className={`absolute -ml-[4px] ${className}`} style={{ left: pct(67) }} width="5" height="5" viewBox="0 0 5 5"><path d="M0 0H5V5Z" fill="#ddeaf2" /></svg>
    <svg className={`absolute ${className}`} style={{ left: pct(68.5) }} width="5" height="5" viewBox="0 0 5 5"><path d="M0 0H5L0 5Z" fill="#ddeaf2" /></svg>
  </>
);

const Timeline = () => (
  <div className="min-w-0 flex-1">
    <div className="relative h-[31px] overflow-hidden text-[#bababa]">
      {BARS.map((b) => (
        <div key={b} className="absolute bottom-0.5 h-2 w-px bg-[#777]" style={{ left: pct(b) }} />
      ))}
      {BARS.slice(0, 19).map((b) => (
        <div key={b} className="absolute bottom-0 pl-1.5 text-[10px] leading-[13px]" style={{ left: pct(b) }}>{b}</div>
      ))}
      {BARS.map((b) => <div key={b} className="absolute bottom-0.5 h-0.5 w-px bg-[#777]" style={{ left: pct(b + 0.5) }} />)}
    </div>
    <div className="h-[10px] border-y border-black bg-[#919191]" />
    <div className="relative h-[14px] bg-[#919191]">
      <Bands />
      <GridLines className="" />
      <div className="absolute inset-y-0 flex items-center gap-[3px] bg-[#868686] pr-1 text-[10px] text-black" style={{ left: pct(73) }}>
        <svg width="8" height="12" viewBox="0 0 8 12"><path d="M0.5 0.5L7.5 6L0.5 11.5Z" fill="#c4c4c4" stroke="#222" /></svg>
        <span className="pt-0.5 leading-3">Halftime</span>
      </div>
    </div>
    <div className="relative h-[7px] bg-[#4c4c4c]"><LoopMarks className="top-[3px]" /></div>
    <div className="relative isolate overflow-hidden bg-[#919191]">
      <Bands />
      {TRACKS.map((t) => <Lane key={t.n} track={t} />)}
      <div className="relative h-[17px]"><span className="absolute bottom-[-2px] right-0.5 z-20 text-[20px] leading-[20px] font-semibold text-[#3c3c3c]">1/4</span></div>
      <GridLines className="z-10" />
      <div className="absolute inset-y-0 z-30 w-px bg-black" style={{ left: pct(70.56) }} />
      <div className="absolute inset-y-0 z-30 w-px bg-black" style={{ left: pct(73) }} />
    </div>
    <div className="relative h-[17px] overflow-hidden text-[#bababa]">
      {TIMES.map((i) => (
        <div key={i} className="absolute top-0 h-2 border-l border-[#888] pl-[3px] text-[10px] leading-[16px]" style={{ left: `${3.07 + i * 7.12}%` }}>1:{28 + i * 2}</div>
      ))}
      <LoopMarks className="top-px" />
    </div>
  </div>
);

const TrackPanel = () => (
  <div className="flex w-[220px] shrink-0 flex-col">
    <div className="flex h-[62px] flex-col items-start gap-1 pl-[3px] pt-[29px]">
      <button className="h-[13px] rounded-full bg-[#b4b4b4] px-1.5 text-[10px] leading-[13px] text-black">Set</button>
      <div className="flex items-center gap-1.5">
        <button aria-label="Previous locator" className="flex h-[12px] w-[11px] items-center justify-center rounded-full bg-[#b4b4b4]"><svg width="8" height="7" viewBox="0 0 8 7"><path d="M0 3.5L4 0.5V6.5ZM3 2.8H8V4.2H3Z" /></svg></button>
        <button aria-label="Next locator" className="flex h-[12px] w-[11px] items-center justify-center rounded-full bg-[#b4b4b4]"><svg width="8" height="7" viewBox="0 0 8 7"><path d="M8 3.5L4 0.5V6.5ZM5 2.8H0V4.2H5Z" /></svg></button>
        <button aria-label="Automation mode" className="ml-1.5 flex h-[11px] w-[21px] items-center justify-center bg-[#b4b4b4]"><svg width="8" height="8" viewBox="0 0 8 8" stroke="#000"><path d="M1.5 6.5L6.5 1.5" /><circle cx="1.5" cy="6.5" r="1" /><circle cx="6.5" cy="1.5" r="1" /></svg></button>
        <button aria-label="Lock envelopes" className="flex h-[11px] w-[21px] items-center justify-center bg-[#b4b4b4]"><Lock size={9} strokeWidth={3} className="[&>rect]:fill-black" /></button>
      </div>
    </div>
    <div className="flex gap-0.5">
      <div className="w-[103px]">
        {TRACKS.map((t) => <TrackHeader key={t.n} track={t} />)}
        <div className="flex h-[17px] items-center gap-[10px] bg-[#8a6ce6] pl-[3px]">
          <button aria-label="Fold Master"><FoldIcon folded /></button>
          <span className="text-[10px] text-black/75">Master</span>
        </div>
      </div>
      <div className="flex-1">
        {TRACKS.map((t) => <TrackMixer key={t.n} track={t} />)}
        <div className="flex h-[17px] items-center bg-[#919191] pl-[3px] pr-0.5">
          <div className="flex flex-1 gap-1">
            <Field label="Master volume" value="0" to={84} className="w-[46px]" />
            <Field label="Cue volume" value="0" to={84} fill="bg-[#3b78ff]" className="w-[46px]" />
          </div>
          <Meter level={70} />
        </div>
      </div>
    </div>
  </div>
);

const RoundLabel = ({ children, on, dim }) => (
  <button className={`flex h-[13px] w-[13px] items-center justify-center rounded-full text-[7px] leading-none ${on ? 'bg-[#ffad00] text-black' : dim ? 'bg-[#383838] text-[#555]' : 'bg-[#0d0d0d] text-[#888]'}`}>{children}</button>
);

const Arrangement = () => (
  <main className="ml-[10px] flex min-w-0 flex-1">
    <div className="flex min-w-0 flex-1 flex-col rounded-l-md rounded-tr-md bg-[#454545] pl-[3px] pr-[4px] pt-[5px]">
      <Overview />
      <div className="flex gap-0.5">
        <Timeline />
        <TrackPanel />
      </div>
    </div>
    <div className="flex w-[23px] shrink-0 flex-col">
      <div className="flex h-[46px] flex-col items-end gap-[3px] pl-1">
        <button aria-label="Arrangement view" className="flex h-[19px] w-[19px] shrink-0 items-center justify-center rounded-full bg-[#454545]"><svg width="12" height="12" viewBox="0 0 12 12" stroke="#ffad00" strokeWidth="2"><path d="M0 2H12M0 6H12M0 10H12" /></svg></button>
        <button aria-label="Session view" className="flex h-[19px] w-[19px] shrink-0 items-center justify-center rounded-full bg-[#454545]"><svg width="12" height="12" viewBox="0 0 12 12" stroke="#8f8f8f" strokeWidth="2"><path d="M2 0V12M6 0V12M10 0V12" /></svg></button>
      </div>
      <div className="flex flex-1 flex-col items-center justify-between rounded-tr-md rounded-br-md bg-[#454545] pb-[26px] pt-[11px] pr-1">
        <div className="h-[381px] w-[7px] rounded-full bg-[#6a6a6a]" />
        <div className="flex flex-col gap-1.5">
          <RoundLabel>I·O</RoundLabel>
          <RoundLabel dim>R</RoundLabel>
          <RoundLabel on>M</RoundLabel>
          <RoundLabel>D</RoundLabel>
        </div>
      </div>
    </div>
  </main>
);

/* ---------- devices ---------- */

const SWEEP = 145;
const polar = (deg, r, cx, cy) => {
  const a = (deg * Math.PI) / 180;
  return `${(cx + r * Math.sin(a)).toFixed(2)} ${(cy - r * Math.cos(a)).toFixed(2)}`;
};
const arc = (from, to, r, cx, cy) => `M${polar(from, r, cx, cy)}A${r} ${r} 0 ${to - from > 180 ? 1 : 0} 1 ${polar(to, r, cx, cy)}`;

// pos runs from 0 to 1; a marked knob rests in the middle and shows no filled arc
const Knob = ({ pos = 0.5, marker, dot, dim }) => {
  const cy = marker ? 18 : 13;
  const height = marker ? 29 : 23;
  const angle = -SWEEP + pos * SWEEP * 2;
  const ink = dim ? '#6c6c6c' : '#1c1c1c';
  const tip = polar(angle, 14, 15, cy).split(' ');
  return (
    <svg className="shrink-0 overflow-visible" width="30" height={height} viewBox={`0 0 30 ${height}`} fill="none" strokeWidth="2">
      {marker && <path d="M11.5 0H18.5L15 4Z" fill="#1c1c1c" />}
      <path d={arc(-SWEEP, SWEEP, 12, 15, cy)} stroke={ink} />
      {!marker && pos > 0 && <path d={arc(-SWEEP, angle, 12, 15, cy)} stroke={dim ? '#c4c4c4' : '#55ddf5'} />}
      <path d={`M15 ${cy}L${polar(angle, 12, 15, cy)}`} stroke={ink} />
      {dot && <circle cx={tip[0]} cy={tip[1]} r="2.5" fill="#f0605a" stroke="#1c1c1c" strokeWidth="1" />}
    </svg>
  );
};

const KnobGroup = ({ label, value, ...knob }) => (
  <div className="flex flex-col items-center whitespace-nowrap">
    {label && <span className="leading-[13px]">{label}</span>}
    <Knob {...knob} />
    <span className="leading-[13px]">{value}</span>
  </div>
);

const RoundBtn = ({ children, className = 'bg-[#b4b4b4]', ...rest }) => (
  <button className={`flex h-[13px] w-[13px] items-center justify-center rounded-full border border-[#222] ${className}`} {...rest}>{children}</button>
);

const Device = ({ title, fold, className, children }) => (
  <section className={`flex shrink-0 flex-col overflow-hidden rounded-[3px] bg-[#939393] ${className}`}>
    <header className="flex h-[17px] shrink-0 items-center gap-[3px] bg-[#ababab] px-[3px]">
      <RoundBtn className="bg-[#ffad00]" aria-label="Device on" />
      {fold === 'down' && <RoundBtn aria-label="Unfold"><svg width="8" height="7" viewBox="0 0 8 7"><path d="M0 0H8L4 7Z" /></svg></RoundBtn>}
      {fold === 'right' && <RoundBtn aria-label="Sidechain toggle" className="bg-[#ffad00]"><svg width="7" height="8" viewBox="0 0 7 8"><path d="M0 0L7 4L0 8Z" /></svg></RoundBtn>}
      <h3 className="ml-px flex-1 font-semibold">{title}</h3>
      <RoundBtn aria-label="Hot-swap"><svg width="9" height="7" viewBox="0 0 9 7" fill="none" stroke="#222"><path d="M3.5 0.5L1 3L3.5 5M1 3H4M5.5 6.5L8 4L5.5 2M8 4H5" /></svg></RoundBtn>
      <RoundBtn aria-label="Save preset"><svg width="7" height="7" viewBox="0 0 7 7"><path d="M0 0H6L7 1V7H0Z" /><rect x="2" y="0.5" width="3" height="2" fill="#b4b4b4" /></svg></RoundBtn>
    </header>
    <div className="flex flex-1 py-1">{children}</div>
  </section>
);

const RackMeter = () => (
  <div className="flex w-[11px] shrink-0 justify-center pt-[74px]">
    <div className="flex h-[41px] gap-px">
      {[0, 1].map((i) => (
        <div key={i} className="flex w-0.5 flex-col justify-end bg-[#161616]">
          <div className="mb-2 h-px bg-[#e4e46c]" />
          <div className="h-[62%] bg-linear-to-t from-[#1fef62] to-[#86e03c]" />
        </div>
      ))}
    </div>
  </div>
);

const Power = () => (
  <Btn on="amber" className="w-[17px]" aria-label="Band on"><svg width="9" height="9" viewBox="0 0 9 9" fill="none" stroke="#000"><circle cx="4.5" cy="4.5" r="3.8" /><path d="M4.5 2V7" /></svg></Btn>
);

const BANDS = [
  { y: 28, end: 118, end2: 118, mark: 134, red: [133, 61], out: '-9.9' },
  { y: 72, end: 114, end2: 114, mark: 116, red: [164, 30], out: '-2.0' },
  { y: 116, end: 121, end2: 118, mark: 122, red: [176, 18], out: '' },
];

const MultibandDisplay = () => (
  <div className="flex h-[163px] w-[258px] shrink-0 rounded-[3px] bg-[#181818]">
    <svg width="210" height="163" viewBox="0 0 210 163" className="shrink-0">
      {Array.from({ length: 9 }, (_, i) => (
        <g key={i}>
          <path d={`M${9.5 + i * 24.1} 8V147`} stroke="#3a3a3a" />
          <text x={9.5 + i * 24.1} y="158" textAnchor="middle" fontSize="10" fill="#8a8a8a">{80 - i * 10}</text>
        </g>
      ))}
      <path d="M9.5 8.5H202.5M9.5 147.5H202.5" stroke="#3a3a3a" />
      {BANDS.map((b) => (
        <g key={b.y}>
          <rect x={b.red[0] + 8.5} y={b.y - 12.5} width={b.red[1]} height="37" fill="#352629" stroke="#5a5355" />
          {Array.from({ length: Math.floor(b.red[1] / 6) }, (_, i) => <path key={i} d={`M${b.red[0] + 13 + i * 6} ${b.y - 12}V${b.y + 24}`} stroke="#4b3a3d" />)}
          <rect x="9" y={b.y} width={b.end} height="5" fill="#5ad7f2" />
          <rect x="9" y={b.y + 6} width={b.end2} height="5" fill="#5ad7f2" />
          <path d={`M${b.mark + 9} ${b.y}V${b.y + 5}M${b.mark + 9} ${b.y + 6}V${b.y + 11}`} stroke="#f0b428" strokeWidth="2" />
          <text x="13" y={b.y + 21} fontSize="10" fontWeight="600" fill="#5ad7f2">{b.out}</text>
        </g>
      ))}
    </svg>
    <div className="flex flex-1 flex-col pt-[2px] font-semibold">
      <span className="pl-1 font-medium leading-[13px] text-[#a8a8a8]">Above</span>
      {['-25.0 dB', '-12.0 dB', '-7.00 dB'].map((t) => (
        <div key={t} className="flex h-11 flex-col pt-[3px] leading-4 whitespace-nowrap">
          <span className="text-[#ffad1f]">{t}</span>
          <span className="text-[#5ad7f2]">1 : 4.00</span>
        </div>
      ))}
      <div className="-mt-0.5 flex gap-[3px]">
        {['T', 'B', 'A'].map((l) => (
          <button key={l} className={`h-3 w-[11px] border border-[#5ad7f2] text-[9px] leading-[10px] ${l === 'A' ? 'bg-[#5ad7f2] text-black' : 'text-[#5ad7f2]'}`}>{l}</button>
        ))}
      </div>
    </div>
  </div>
);

const GainColumn = ({ label }) => (
  <>
    <span className="text-center leading-[14px] font-semibold">{label}</span>
    {[1, 2, 3].map((i) => <div key={i} className="h-11"><KnobGroup value="0.00 dB" marker /></div>)}
  </>
);

const Multiband = () => (
  <Device title="A Standard Multiband Comp" fold="down" className="w-[480px]">
    <div className="ml-[7px] flex w-[66px] flex-col">
      <span className="mb-1.5 text-center leading-[14px] font-semibold">Split Freq</span>
      <div className="flex flex-col gap-4">
        <div className="grid grid-cols-[47px_17px] gap-0.5">
          <Btn on="amber">High</Btn><Power />
          <Field label="High frequency" value="6.00 kHz" to={75} /><Btn>S</Btn>
        </div>
        <div className="grid grid-cols-[47px_17px] gap-0.5">
          <span className="row-span-2 self-center text-center">Mid</span><Power />
          <Btn>S</Btn>
        </div>
        <div className="grid grid-cols-[47px_17px] gap-0.5">
          <Btn on="amber">Low</Btn><Power />
          <Field label="Low frequency" value="160 Hz" to={36} /><Btn>S</Btn>
        </div>
      </div>
      <Btn on="amber" className="mt-[10px]">Soft Knee</Btn>
    </div>
    <div className="ml-[6px] flex w-[39px] flex-col">
      <GainColumn label="Input" />
      <Btn on="amber">RMS</Btn>
    </div>
    <div className="ml-[5px]"><MultibandDisplay /></div>
    <div className="flex w-[48px] flex-col"><GainColumn label="Output" /></div>
    <div className="border-l border-[#444]" />
    <div className="flex w-[48px] flex-col gap-px">
      <KnobGroup label="Output" value="0.00 dB" marker />
      <KnobGroup label="Time" value="100 %" marker />
      <KnobGroup label="Amount" value="100 %" pos={1} />
    </div>
  </Device>
);

const DelayDisplay = () => (
  <div className="flex h-[163px] w-[175px] shrink-0 flex-col overflow-hidden rounded-[3px] bg-[#181818] font-semibold">
    <svg width="175" height="90" viewBox="0 0 175 90" fill="none">
      <path d="M0 30.5H175M0 45.5H175M0 59.5H175M0 74.5H175M0 89.5H175M10.5 0V90M13.5 0V90M16.5 0V90M20.5 0V90M41.5 0V90M53.5 0V90M62.5 0V90M69.5 0V90M74.5 0V90M79.5 0V90M84.5 0V90M88.5 0V90M109.5 0V90M121.5 0V90M130.5 0V90M137.5 0V90M143.5 0V90M148.5 0V90M152.5 0V90M156.5 0V90" stroke="#343434" />
      <path d="M0 88C35 87 48 82 64 60C77 40 81 30.5 101 30.5S125 38 138 59C150 79 160 86 175 88" stroke="#4fc4dc" strokeWidth="1.5" />
      <circle cx="101" cy="59" r="5.5" stroke="#ffad00" strokeWidth="2" />
    </svg>
    <div className="flex items-center gap-1 pl-1.5 pr-1 leading-[22px] whitespace-nowrap">
      <input type="checkbox" aria-label="Filter on" defaultChecked className="mr-0.5 h-[9px] w-[9px] appearance-none bg-[#ffad00]" />
      <span className="font-medium text-[#9a9a9a]">Filter</span><span className="text-[#ffad1f]">1.61 kHz</span>
      <span className="ml-auto font-medium text-[#9a9a9a]">Width</span><span className="text-[#ffad1f]">3.07</span>
    </div>
    <div className="flex items-center gap-1 leading-4 font-medium text-[#9a9a9a]"><div className="flex-1 border-t border-[#444]" />Modulation<div className="flex-1 border-t border-[#444]" /></div>
    <div className="grid grid-cols-3 px-1 pl-2 text-center leading-[14px]">
      {['Rate', 'Filter', 'Time'].map((l) => <span key={l} className="font-medium text-[#9a9a9a]">{l}</span>)}
      <span className="text-[#ffad1f]">0.50 Hz</span><span className="text-[#ffad1f]">0.0 %</span><span className="text-[#ffad1f]">0.0 %</span>
    </div>
  </div>
);

const DelaySide = ({ label }) => (
  <div className="flex w-[47px] flex-col items-stretch">
    <span className="text-center leading-[14px]">{label}</span>
    <Btn on="cyan">Time</Btn>
    <div className="mt-[15px]"><KnobGroup value="21.0 ms" pos={0.33} dot /></div>
    <div className="relative mt-4">
      <Field label={`${label} offset`} value="0.0 %" bg="bg-[#8a8a8a]" />
      <svg className="absolute right-px top-0.5" width="8" height="9" viewBox="0 0 8 9"><path d="M8 0V9L0 4.5Z" fill="#ddd" /></svg>
    </div>
  </div>
);

const Delay = () => (
  <Device title="Delay" className="w-[371px]">
    <div className="ml-[6px] w-[117px]">
      <div className="flex justify-between">
        <DelaySide label="Left" />
        <div className="flex w-[17px] flex-col items-center gap-1 pt-[14px]">
          <div className="w-px flex-1 bg-[#555]" />
          <Btn on="amber" className="w-[17px]" aria-label="Link"><svg width="11" height="7" viewBox="0 0 11 7" fill="none" stroke="#000"><path d="M0 3.5H11" /><rect x="2.5" y="1" width="6" height="5" rx="1.5" fill="#ffad00" /></svg></Btn>
          <div className="w-px flex-1 bg-[#555]" />
        </div>
        <DelaySide label="Right" />
      </div>
      <div className="mt-1.5 grid grid-cols-[1fr_46px_1fr] items-center">
        <span />
        <KnobGroup label="Feedback" value="0.0 %" pos={0} />
        <div className="flex items-center justify-end gap-1">
          <div className="w-2 border-t border-[#555]" />
          <Btn className="w-[23px]" aria-label="Freeze"><svg width="15" height="8" viewBox="0 0 15 8" fill="none" stroke="#000" strokeWidth="1.5"><circle cx="4" cy="4" r="3" /><circle cx="11" cy="4" r="3" /></svg></Btn>
        </div>
      </div>
    </div>
    <div className="ml-[6px]"><DelayDisplay /></div>
    <div className="ml-[6px] flex w-[55px] flex-col">
      <span className="leading-[14px]">Mode</span>
      <div className="flex flex-col gap-[3px]">
        <Btn on="amber">Repitch</Btn>
        <Btn>Fade</Btn>
        <Btn>Jump</Btn>
      </div>
      <Btn on="amber" className="mt-[18px]">Ping Pong</Btn>
      <div className="mt-[23px]"><KnobGroup label="Dry/Wet" value="50 %" pos={0.5} /></div>
    </div>
  </Device>
);

const LevelColumn = ({ label, value, level, shade, mark, arrow, gr }) => (
  <div className="flex flex-col items-center whitespace-nowrap">
    <span className="h-[17px] pt-1 leading-[13px]">{label}</span>
    <svg width={gr === undefined ? 49 : 33} height="110" viewBox={gr === undefined ? '0 0 49 110' : '8 0 33 110'} fill="none">
      <rect x={gr === undefined ? 18.5 : 19.5} y="0.5" width={gr === undefined ? 12 : 10} height="109" stroke="#4a4a4a" />
      <path d="M19 17.5H30" stroke="#4a4a4a" />
      {gr > 0 && <rect x="20" y="17" width="9" height="11" fill="#f0a83a" />}
      {level && (
        <>
          <rect x="19" y={110 - shade} width="11" height={shade - level} fill="#4f8a35" />
          <rect x="19" y={110 - level} width="11" height={level} fill="url(#levelGreen)" />
          <path d={`M24.5 ${110 - shade}V110`} stroke="#181818" />
          <path d={`M19 ${mark}H24M25 ${mark + 3}H30`} stroke="#d8e05a" />
          <path d={`M33 ${arrow}L41 ${arrow - 4}V${arrow + 4}Z`} fill="#c8c8c8" />
        </>
      )}
    </svg>
    <span className="leading-4">{value}</span>
  </div>
);

const CompDisplay = ({ thresh, gr, out, values }) => (
  <div className="flex h-[163px] w-[131px] shrink-0 flex-col rounded-[3px] bg-[#181818] text-[#a8a8a8]">
    <svg width="0" height="0" className="absolute"><defs><linearGradient id="levelGreen" x1="0" y1="1" x2="0" y2="0"><stop stopColor="#12f060" /><stop offset="1" stopColor="#7cf540" /></linearGradient></defs></svg>
    <div className="grid flex-1 grid-cols-[49px_33px_49px]">
      <LevelColumn label="Thresh" value={values[0]} {...thresh} />
      <LevelColumn label="GR" value={values[1]} gr={gr} />
      <LevelColumn label="Out" value={values[2]} {...out} />
    </div>
    <div className="flex h-[20px] items-stretch border-t border-[#444]">
      <button aria-label="Collapsed view" className="flex w-5 items-center justify-center border-r border-[#444]"><svg width="7" height="8" viewBox="0 0 7 8" stroke="#ffad00"><path d="M1 4V8M3.5 1V8M6 3V8" /></svg></button>
      <button aria-label="Transfer curve view" className="flex w-[21px] items-center justify-center border-r border-[#444]"><svg width="7" height="8" viewBox="0 0 7 8" stroke="#a8a8a8" fill="none"><path d="M0.5 8L2 3L4 1.5H7" /></svg></button>
      <button aria-label="Activity view" className="flex w-5 items-center justify-center border-r border-[#444]"><svg width="9" height="8" viewBox="0 0 9 8" stroke="#a8a8a8"><path d="M0.5 3V5M2.5 2V6M4.5 0V8M6.5 2V6M8.5 3V5" /></svg></button>
      <span className="flex flex-1 items-center justify-center gap-1 whitespace-nowrap">Knee <span className="font-semibold text-[#5ad7f2]">6.0 dB</span></span>
    </div>
  </div>
);

const CompCore = ({ display, makeupOn }) => (
  <>
    <div className="ml-[5px] flex w-[43px] flex-col">
      <KnobGroup label="Ratio" value="inf : 1" pos={1} />
      <KnobGroup label="Attack" value="0.01 ms" pos={0} />
      <KnobGroup label="Release" value="50.0 ms" pos={0.19} />
      <Btn className="mt-0.5">Auto</Btn>
    </div>
    <div className="ml-[6px]"><CompDisplay {...display} /></div>
    <div className="ml-[6px] flex w-[43px] flex-col pt-px">
      <Btn on={makeupOn ? 'white' : undefined}>Makeup</Btn>
      <div className="mt-[28px] flex flex-col gap-[3px]">
        <Btn on="amber">Peak</Btn>
        <Btn>RMS</Btn>
        <Btn>Expand</Btn>
      </div>
      <div className="mt-[26px]"><KnobGroup label="Dry/Wet" value="100 %" pos={1} /></div>
    </div>
  </>
);

const FILTERS = ['M1 2C6 2 7 5 9 5H17M1 8C6 8 7 5 9 5', 'M1 5H4L7 1.5H11L14 5H17M4 5L7 8.5H11L14 5', 'M1 5H8C11 5 11 2 17 2M8 5C11 5 11 8 17 8', 'M1 2H11C15 2 16 4 16 9', 'M2 9C2 4 3 2 6 2H12C15 2 16 4 16 9', 'M2 9C2 4 3 2 7 2H17'];

const Sidechain = () => (
  <div className="ml-[5px] flex w-[153px] flex-col">
    <div className="flex items-center pl-2 pt-px">
      <Btn on="amber" className="w-[58px]">Sidechain</Btn>
      <RoundBtn className="ml-[5px] bg-[#a4a4a4]" aria-label="Listen"><Headphones size={8} strokeWidth={2.5} /></RoundBtn>
      <Btn className="ml-[5px] w-[56px]">EQ</Btn>
    </div>
    <div className="flex flex-1 pt-1">
      <div className="flex w-[73px] flex-col">
        <label htmlFor="audio-from" className="pl-px leading-[13px]">Audio From</label>
        {['Drum Rack', '- Post FX'].map((o, i) => (
          <div key={o} className="relative mb-[3px] flex h-[13px] items-center border border-[#3a3a3a] bg-[#d4d4d4]">
            {i === 1 && <span className="ml-px flex gap-px"><span className="h-[9px] w-0.5 bg-[#5fdc4a]" /><span className="h-[9px] w-0.5 bg-[#5fdc4a]" /></span>}
            <select id={i === 0 ? 'audio-from' : 'audio-tap'} aria-label={i ? 'Audio tap point' : undefined} className={`block w-full appearance-none bg-transparent text-[10px] leading-none text-black ${i ? 'pl-1' : 'pl-px'}`}><option>{o}</option></select>
            <svg className="pointer-events-none absolute right-0.5 top-[3px]" width="7" height="5" viewBox="0 0 7 5"><path d="M0 0H7L3.5 5Z" /></svg>
          </div>
        ))}
        <div className="mt-px"><KnobGroup label="Gain" value="0.00 dB" pos={0.39} /></div>
        <KnobGroup label="Mix" value="100 %" pos={1} />
      </div>
      <div className="ml-[5px] border-l border-[#555]" />
      <div className="ml-[5px] flex flex-1 flex-col">
        <span className="leading-[13px]">Filter Type</span>
        <div className="grid grid-cols-3 gap-[3px]">
          {FILTERS.map((d, i) => (
            <Btn key={i} on={i === 5 ? 'white' : undefined} className="w-[21px]" aria-label={`Filter type ${i + 1}`}><svg width="18" height="10" viewBox="0 0 18 10" fill="none" stroke="#333"><path d={d} /></svg></Btn>
          ))}
        </div>
        <div className="mt-1"><KnobGroup label="Freq" value="200 Hz" pos={0.27} dim /></div>
        <KnobGroup label="Q" value="0.71" pos={0.39} dim />
      </div>
    </div>
  </div>
);

const Rack = () => (
  <section className="flex min-w-0 flex-1 rounded-[4px] bg-[#505050] py-1 pl-1 pr-[3px]">
    <RackMeter />
    <Multiband />
    <RackMeter />
    <Delay />
    <RackMeter />
    <Device title="Compressor" fold="down" className="w-[240px]">
      <CompCore display={{ thresh: { level: 36, shade: 50, mark: 37, arrow: 31 }, gr: 0, out: { level: 36, shade: 50, mark: 40, arrow: 55 }, values: ['-5.00 dB', '0.0', '0.00 dB'] }} />
    </Device>
    <RackMeter />
    <Device title="Compressor" fold="right" className="w-[409px]">
      <Sidechain />
      <div className="ml-[7px] border-l border-[#555]" />
      <div className="ml-[3px] flex">
        <CompCore makeupOn display={{ thresh: { level: 49, shade: 76, mark: 28, arrow: 45 }, gr: 1, out: { level: 33, shade: 50, mark: 34, arrow: 55 }, values: ['-10.0 dB', '-3.9', '0.00 dB'] }} />
      </div>
    </Device>
    <RackMeter />
    <div className="flex flex-1 items-center justify-center bg-[#919191]">Drop Audio Effects Here</div>
  </section>
);

const InfoBox = () => (
  <section className="flex w-[200px] shrink-0 flex-col rounded-[4px] bg-[#505050] p-1">
    <h2 className="h-4 bg-[#a8a8a8] pl-[5px] leading-[17px] font-semibold">Scrub Area</h2>
    <div className="flex-1 bg-[#919191] pl-[5px] pt-[3px] font-['Roboto',sans-serif] font-normal leading-[15px] whitespace-nowrap">
      <p>Click here to make playback jump to this<br />point. The size of the jump will be<br />quantized by the global quantization<br />setting.</p>
      <p>Hold the mouse down over the scrub<br />area to repeatedly play a section the size<br />of the chosen quantization setting. Set<br />quantization to small settings or ‘None’<br />to scrub through the music.</p>
      <p className="mt-[15px]">[Ctrl + Scroll Wheel] Zoom In/Out</p>
    </div>
  </section>
);

const TriangleBtn = ({ label }) => (
  <button aria-label={label} className="flex h-[19px] w-[19px] items-center justify-center rounded-full bg-[#505050]"><svg width="12" height="11" viewBox="0 0 12 11"><path d="M6 0L12 11H0Z" fill="#a0a0a0" /></svg></button>
);

const StatusBar = () => (
  <footer className="flex h-[38px] items-start border-b-2 border-black px-2 text-[10px]">
    <div className="pt-[9px]"><TriangleBtn label="Toggle info view" /></div>
    <div className="ml-2 mt-2 h-[22px] flex-1 rounded-[3px] border-[3px] border-[#505050] bg-[#919191]" />
    <div className="ml-[9px] mt-2 flex h-[22px] w-[206px] items-center rounded-[3px] border-[3px] border-[#505050] bg-[#a9bcc6]"><div className="h-[6px] w-full bg-[#1f1f22]" /></div>
    <div className="ml-[7px] flex h-[30px] w-[201px] items-center justify-between rounded-b-md bg-[#505050] pl-1 pr-[3px] pt-[9px]">
      <span className="font-semibold text-black">Break Loop</span>
      <svg width="135" height="16" viewBox="0 0 135 16">
        <path d="M0 0H41V16H0ZM43 0H75V16H43ZM77 0H98V16H77ZM100 0H135V16H100Z" fill="#a8a8a8" />
        <path d="M11 2H33V15H11ZM54 2H69V15H54ZM82 2H93V15H82ZM119 2H130V15H119Z" fill="#1d1d1d" />
        <path d="M1 3H6M1 12H6M70 4H74M70 9H74M94 6H97M101 2H107M131 6H134" stroke="#e0a838" strokeWidth="2" />
        <path d="M44 4H50M50 9H53" stroke="#7cc4dc" strokeWidth="2" />
        <path d="M8 1V14M35 2V14M38 2V14M48 11V15M79 2V14M111 3V14M116 2V14" stroke="#666" strokeDasharray="2 2" />
      </svg>
    </div>
    <div className="ml-2 pt-[9px]"><TriangleBtn label="Toggle device view" /></div>
  </footer>
);

const App = () => (
  <div className="flex min-h-screen flex-col bg-[#717171] font-['Inter',sans-serif] font-medium text-black">
    <WindowBar />
    <Toolbar />
    <div className="flex px-2 pl-[9px]">
      <Browser />
      <Arrangement />
    </div>
    <div className="mt-2 flex gap-2 px-2 text-[10px]">
      <InfoBox />
      <Rack />
    </div>
    <StatusBar />
  </div>
);

export default App;
